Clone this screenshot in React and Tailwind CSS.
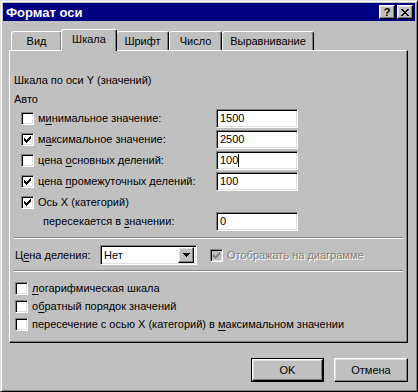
import React from "react";

const raised =
  "border border-t-white border-l-white border-r-black border-b-black shadow-[inset_-1px_-1px_#808080,inset_1px_1px_#dfdfdf]";
const sunken =
  "border border-t-[#808080] border-l-[#808080] border-r-white border-b-white shadow-[inset_1px_1px_#000,inset_-1px_-1px_#dfdfdf]";

function Check({ color = "#000" }) {
  return (
    <svg width="7" height="7" viewBox="0 0 7 7" shapeRendering="crispEdges">
      <path
        fill={color}
        d="M6 0h1v3h-1zM5 1h1v3h-1zM4 2h1v3h-1zM3 3h1v3h-1zM2 4h1v3h-1zM1 3h1v3h-1zM0 2h1v3h-1z"
      />
    </svg>
  );
}

function Checkbox({ checked, disabled }) {
  return (
    <div
      className={`w-[13px] h-[13px] shrink-0 flex items-center justify-center ${sunken} ${
        disabled ? "bg-[#c0c0c0]" : "bg-white"
      }`}
    >
      {checked && <Check color={disabled ? "#808080" : "#000"} />}
    </div>
  );
}

function U({ children }) {
  return <span className="underline underline-offset-[2px]">{children}</span>;
}

function Field({ value, cursor }) {
  return (
    <div className={`w-[82px] h-[19px] bg-white flex items-center pl-[3px] ${sunken}`}>
      <span>{value}</span>
      {cursor && <span className="w-px h-[13px] bg-black" />}
    </div>
  );
}

function Tab({ label, width, active }) {
  return (
    <div
      className={`flex items-center justify-center rounded-t-[3px] border-t border-l border-t-white border-l-white border-r border-r-black shadow-[inset_-1px_0_#808080] bg-[#c0c0c0] ${
        active ? "h-[22px] -mb-[1px] relative z-10 -mx-[1px]" : "h-[19px]"
      }`}
      style={{ width }}
    >
      <span className={active ? "-mt-[2px]" : ""}>{label}</span>
    </div>
  );
}

function CheckRow({ checked, children, value, cursor }) {
  return (
    <div className="h-[21px] flex items-center">
      <div className="w-[202px] pl-[7px] flex items-center gap-[4px]">
        <Checkbox checked={checked} />
        <span>{children}</span>
      </div>
      {value !== undefined && <Field value={value} cursor={cursor} />}
    </div>
  );
}

function Separator() {
  return <div className="mr-[4px] border-t border-t-[#808080] border-b border-b-white" />;
}

export default function App() {
  return (
    <div className="w-[418px] h-[392px] bg-[#c0c0c0] border border-t-[#dfdfdf] border-l-[#dfdfdf] border-r-black border-b-black shadow-[inset_1px_1px_#fff,inset_-1px_-1px_#808080] p-[2px] flex flex-col font-['Liberation_Sans',Arial,sans-serif] text-[11px] text-black leading-[13px] select-none">
      {/* title bar */}
      <div className="h-[18px] bg-[#000080] flex items-center pl-[3px] pr-[2px]">
        <span className="text-white font-bold text-[13px] flex-1">Формат оси</span>
        <div className="flex gap-[2px]">
          <div className={`w-[16px] h-[14px] bg-[#c0c0c0] flex items-center justify-center ${raised}`}>
            <span className="font-bold text-[11px] leading-none">?</span>
          </div>
          <div className={`w-[16px] h-[14px] bg-[#c0c0c0] flex items-center justify-center ${raised}`}>
            <svg width="8" height="7" viewBox="0 0 8 7" shapeRendering="crispEdges">
              <path
                fill="#000"
                d="M0 0h2v1h-2zM6 0h2v1h-2zM1 1h2v1h-2zM5 1h2v1h-2zM2 2h4v1h-4zM3 3h2v1h-2zM2 4h4v1h-4zM1 5h2v1h-2zM5 5h2v1h-2zM0 6h2v1h-2zM6 6h2v1h-2z"
              />
            </svg>
          </div>
        </div>
      </div>

      {/* tabs */}
      <div className="mt-[8px] ml-[8px] h-[21px] flex items-end">
        <Tab label="Вид" width={51} />
        <Tab label="Шкала" width={56} active />
        <Tab label="Шрифт" width={53} />
        <Tab label="Число" width={53} />
        <Tab label="Выравнивание" width={92} />
      </div>

      {/* panel */}
      <div className="ml-[6px] w-[399px] h-[293px] border border-t-white border-l-white border-r-black border-b-black shadow-[inset_-1px_-1px_#808080] pl-[4px] flex flex-col">
        <div className="mt-[19px] h-[21px] flex items-center">Шкала по оси Y (значений)</div>
        <div className="h-[17px] flex items-center">Авто</div>

        <CheckRow value="1500">
          м<U>и</U>нимальное значение:
        </CheckRow>
        <CheckRow checked value="2500">
          м<U>а</U>ксимальное значение:
        </CheckRow>
        <CheckRow value="100" cursor>
          цена <U>о</U>сновных делений:
        </CheckRow>
        <CheckRow checked value="100">
          цена <U>п</U>ромежуточных делений:
        </CheckRow>
        <div className="h-[20px] flex items-center pl-[7px] gap-[4px]">
          <Checkbox checked />
          <span>Ось X (категорий)</span>
        </div>
        <div className="h-[19px] flex items-center">
          <div className="w-[202px] pl-[29px]">
            пересекается в <U>з</U>начении:
          </div>
          <Field value="0" />
        </div>

        <div className="mt-[6px]">
          <Separator />
        </div>

        <div className="mt-[6px] h-[20px] flex items-center">
          <div className="w-[86px] pl-[1px]">
            Ц<U>е</U>на деления:
          </div>
          <div className={`w-[97px] h-[20px] bg-white flex items-center ${sunken}`}>
            <span className="flex-1 pl-[3px]">Нет</span>
            <div className={`w-[16px] h-[16px] mr-[2px] bg-[#c0c0c0] flex items-center justify-center ${raised}`}>
              <svg width="7" height="4" viewBox="0 0 7 4" shapeRendering="crispEdges">
                <path fill="#000" d="M0 0h7v1h-7zM1 1h5v1h-5zM2 2h3v1h-3zM3 3h1v1h-1z" />
              </svg>
            </div>
          </div>
          <div className="ml-[13px] flex items-center gap-[4px]">
            <Checkbox checked disabled />
            <span className="text-[#808080] [text-shadow:1px_1px_#fff]">Отображать на диаграмме</span>
          </div>
        </div>

        <div className="mt-[5px]">
          <Separator />
        </div>

        <div className="mt-[7px] flex flex-col pl-[1px]">
          <div className="h-[18px] flex items-center gap-[4px]">
            <Checkbox />
            <span>
              <U>л</U>огарифмическая шкала
            </span>
          </div>
          <div className="h-[18px] flex items-center gap-[4px]">
            <Checkbox />
            <span>
              о<U>б</U>ратный порядок значений
            </span>
          </div>
          <div className="h-[18px] flex items-center gap-[4px]">
            <Checkbox />
            <span>
              пересечение с осью X (категорий) в <U>м</U>аксимальном значении
            </span>
          </div>
        </div>
      </div>

      {/* buttons */}
      <div className="mt-[15px] ml-[6px] w-[399px] flex justify-end gap-[10px]">
        <div className="w-[73px] h-[24px] border border-black">
          <div className={`w-full h-full bg-[#c0c0c0] flex items-center justify-center ${raised}`}>OK</div>
        </div>
        <div className={`w-[74px] h-[24px] bg-[#c0c0c0] flex items-center justify-center ${raised}`}>
          Отмена
        </div>
      </div>
    </div>
  );
}
